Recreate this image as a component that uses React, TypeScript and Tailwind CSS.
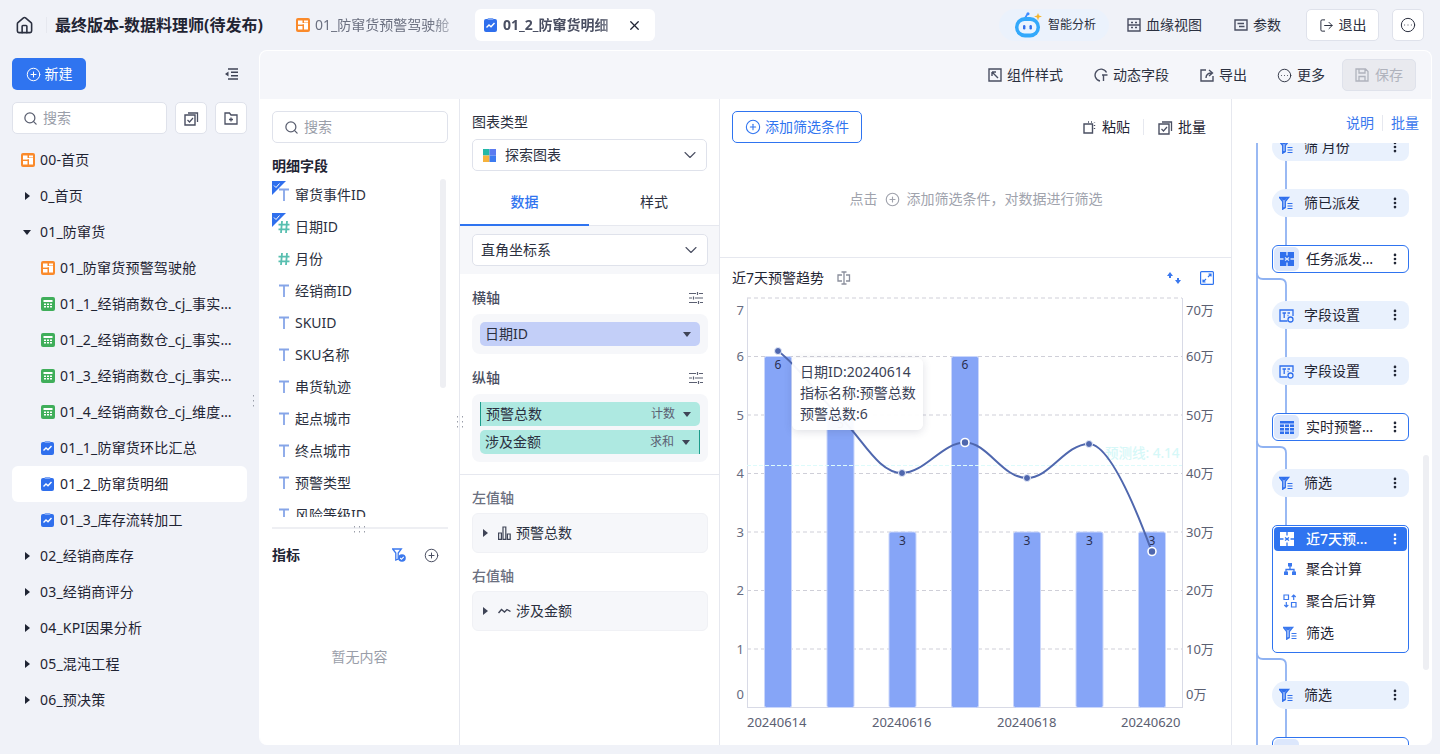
import type { ReactNode } from 'react';
import {
  ChevronDown,
  CircleEllipsis,
  CirclePlus,
  House,
  EllipsisVertical,
  LogOut,
  Search,
  X,
} from 'lucide-react';

const font = { fontFamily: '"Noto Sans", "Noto Sans CJK SC", sans-serif' };

/* ---------- small icons ---------- */

const Caret = ({ open = false, color = '#1f2433' }: { open?: boolean; color?: string }) => (
  <svg width="12" height="12" viewBox="0 0 12 12" className="shrink-0">
    {open ? <path d="M2 4h8l-4 5z" fill={color} /> : <path d="M4 2v8l5-4z" fill={color} />}
  </svg>
);

const DashIcon = ({ size = 14 }: { size?: number }) => (
  <svg width={size} height={size} viewBox="0 0 14 14" className="shrink-0">
    <rect width="14" height="14" rx="2" fill="#FA8A2B" />
    <path d="M2 2.500h4.500v4H2zM8 2.500h4v2H8zM2 8h4.500v3.500H2zM8 6h4v5.500H8z" fill="#fff" />
    <path d="M2 5h10v1.200H2z" fill="#fff" />
  </svg>
);

const SheetIcon = () => (
  <svg width="14" height="14" viewBox="0 0 14 14" className="shrink-0">
    <rect width="14" height="14" rx="2" fill="#3FAE5A" />
    <path d="M2.500 3h9v2h-9zM3 6.500h2v1.500H3zM6 6.500h2v1.500H6zM9 6.500h2v1.500H9zM3 9h2v1.500H3zM6 9h2v1.500H6zM9 9h2v1.500H9z" fill="#fff" />
  </svg>
);

const ChartIcon = ({ size = 14 }: { size?: number }) => (
  <svg width={size} height={size} viewBox="0 0 14 14" className="shrink-0">
    <rect y="1" width="13" height="13" rx="2" fill="#2F6FED" />
    <rect x="3.500" y="0" width="6" height="2" rx="1" fill="#7EA6F4" />
    <path d="M2.500 9.500 5 7l2 1.800 3.500-3.800" fill="none" stroke="#fff" strokeWidth="1.400" />
  </svg>
);

const FilterIcon = ({ color = '#2F6FED' }: { color?: string }) => (
  <svg width="14" height="14" viewBox="0 0 14 14" className="shrink-0">
    <path d="M.5 1.500h9l-3.300 4v6L3.800 13V5.500z" fill="none" stroke={color} strokeWidth="1.500" />
    <path d="M1.500 1.500h7l-2.500 3H3.800z" fill={color} />
    <path d="M8.500 7.500h5M8.500 10h5M8.500 12.500h5" stroke={color} strokeWidth="1.200" />
  </svg>
);

const FilterCheckIcon = () => (
  <svg width="14" height="14" viewBox="0 0 14 14" className="shrink-0">
    <path d="M.7 1h8.600L6.200 5v6L3.800 12V5z" fill="none" stroke="#3B78EE" strokeWidth="1.300" />
    <circle cx="10" cy="10" r="3.800" fill="#3B78EE" />
    <path d="M8.200 10l1.300 1.300 2.200-2.500" fill="none" stroke="#fff" strokeWidth="1.100" />
  </svg>
);

const FieldSetIcon = () => (
  <svg width="15" height="15" viewBox="0 0 15 15" className="shrink-0">
    <path d="M8.500 13H1V2h13v6" fill="none" stroke="#2F6FED" strokeWidth="1.300" />
    <path d="M3.500 5H7M5.200 5v5M8.500 5h2.500M8.500 7.500h1" stroke="#2F6FED" strokeWidth="1.300" fill="none" />
    <circle cx="11.500" cy="11.500" r="2.500" fill="none" stroke="#2F6FED" strokeWidth="1.300" />
  </svg>
);

const PuzzleIcon = ({ color = '#2F6FED', hole = '#DCE7FC' }: { color?: string; hole?: string }) => (
  <svg width="14" height="14" viewBox="0 0 14 14" className="shrink-0">
    <rect width="14" height="14" fill={color} />
    <path d="M7 0v3.500M7 10.500V14M0 7h3.500M10.500 7H14M5 5.500l4 3M9 5.500 5 8.500" stroke={hole} strokeWidth="1.300" fill="none" />
  </svg>
);

const TableIcon = () => (
  <svg width="14" height="14" viewBox="0 0 14 14" className="shrink-0">
    <path d="M0 1h14v2.500H0zM0 4.500h4v2.500H0zM5 4.500h4v2.500H5zM10 4.500h4v2.500h-4zM0 8h4v2.500H0zM5 8h4v2.500H5zM10 8h4v2.500h-4zM0 11.500h4V14H0zM5 11.500h4V14H5zM10 11.500h4V14h-4z" fill="#2F6FED" />
  </svg>
);

const TreeIcon = () => (
  <svg width="14" height="14" viewBox="0 0 14 14" className="shrink-0">
    <path d="M5 1h4v3.500H5zM1 9.500h4V13H1zM9 9.500h4V13H9z" fill="#3B78EE" />
    <path d="M7 4v3.500M3 10V7.500h8V10" fill="none" stroke="#3B78EE" strokeWidth="1.300" />
  </svg>
);

const SwapIcon = () => (
  <svg width="14" height="14" viewBox="0 0 14 14" className="shrink-0">
    <path d="M1 1h4.500v4.500H1zM8.500 8.500H13V13H8.500z" fill="none" stroke="#3B78EE" strokeWidth="1.200" />
    <path d="M10.700 6V1M8.700 3l2-2 2 2M3.300 8v5M1.300 11l2 2 2-2" fill="none" stroke="#3B78EE" strokeWidth="1.200" />
  </svg>
);

const Tune = () => (
  <svg width="14" height="14" viewBox="0 0 14 14" className="shrink-0">
    <path d="M0 2.500h7M10 2.500h4M0 7h3M6 7h8M0 11.500h8M11 11.500h3M8.500 1v3M4.500 5.500v3M9.500 10v3" stroke="#5b6072" strokeWidth="1.200" fill="none" />
  </svg>
);

const FieldT = () => (
  <svg width="12" height="14" viewBox="0 0 12 14" className="shrink-0">
    <path d="M1 1.500h10M6 1.500V13" stroke="#86A5E8" strokeWidth="1.800" fill="none" />
  </svg>
);

const FieldHash = () => (
  <svg width="12" height="14" viewBox="0 0 12 14" className="shrink-0">
    <path d="M4 1 3 13M9 1 8 13M.5 4.700h11M.5 9.300h11" stroke="#58BFB0" strokeWidth="1.800" fill="none" />
  </svg>
);

const CheckedCorner = () => (
  <svg width="14" height="14" viewBox="0 0 14 14" className="absolute left-0 top-[2px]">
    <path d="M0 0h14L0 14z" fill="#2F6FED" />
    <path d="M2 4.500 4 6.500 7.500 2.500" stroke="#fff" strokeWidth="1" fill="none" />
  </svg>
);

const BatchIcon = () => (
  <svg width="15" height="15" viewBox="0 0 15 15" className="shrink-0">
    <path d="M1 4h10v10H1z" fill="none" stroke="#4a4f62" strokeWidth="1.400" />
    <path d="M4 2h9.500v9" fill="none" stroke="#4a4f62" strokeWidth="1.300" />
    <path d="M3.500 9l2 2 3.500-4" fill="none" stroke="#4a4f62" strokeWidth="1.200" />
  </svg>
);

const BoxIcon = ({ children }: { children: ReactNode }) => (
  <svg width="14" height="14" viewBox="0 0 14 14" fill="none" stroke="#4a4f62" strokeWidth="1.400" className="shrink-0">
    {children}
  </svg>
);

const RobotIcon = () => (
  <svg width="27" height="26" viewBox="0 0 27 26" className="shrink-0">
    <path d="M10 6 12.500 2" stroke="#3D8BFF" strokeWidth="1.600" />
    <circle cx="13" cy="1.800" r="1.500" fill="#3D8BFF" />
    <rect x="0" y="5" width="25" height="20.500" rx="10" fill="#33A9FB" />
    <rect x="3.500" y="9" width="18" height="12.500" rx="6" fill="#EAF4FF" />
    <rect x="8" y="13" width="2.400" height="4.500" rx="1.200" fill="#2F6FED" />
    <rect x="14.500" y="13" width="2.400" height="4.500" rx="1.200" fill="#2F6FED" />
    <path d="M23 1l1 2.500L27 4.500l-3 1L23 8.500l-1-3-3-1 3-1z" fill="#F5B52E" />
  </svg>
);

const DragDots = ({ cols, rows, className }: { cols: number; rows: number; className: string }) => (
  <svg width={cols * 5} height={rows * 5} className={`absolute ${className}`}>
    {Array.from({ length: cols * rows }).map((_, i) => (
      <rect key={i} x={(i % cols) * 5 + 1} y={Math.floor(i / cols) * 5 + 1} width="1" height="1.500" fill="#9a9ea9" />
    ))}
  </svg>
);

/* ---------- left tree ---------- */

type TreeRow = { label: string; icon?: ReactNode; indent?: boolean; caret?: 'open' | 'closed'; active?: boolean };

const treeRows: TreeRow[] = [
  { label: '00-首页', icon: <DashIcon /> },
  { label: '0_首页', caret: 'closed' },
  { label: '01_防窜货', caret: 'open' },
  { label: '01_防窜货预警驾驶舱', icon: <DashIcon />, indent: true },
  { label: '01_1_经销商数仓_cj_事实…', icon: <SheetIcon />, indent: true },
  { label: '01_2_经销商数仓_cj_事实…', icon: <SheetIcon />, indent: true },
  { label: '01_3_经销商数仓_cj_事实…', icon: <SheetIcon />, indent: true },
  { label: '01_4_经销商数仓_cj_维度…', icon: <SheetIcon />, indent: true },
  { label: '01_1_防窜货环比汇总', icon: <ChartIcon />, indent: true },
  { label: '01_2_防窜货明细', icon: <ChartIcon />, indent: true, active: true },
  { label: '01_3_库存流转加工', icon: <ChartIcon />, indent: true },
  { label: '02_经销商库存', caret: 'closed' },
  { label: '03_经销商评分', caret: 'closed' },
  { label: '04_KPI因果分析', caret: 'closed' },
  { label: '05_混沌工程', caret: 'closed' },
  { label: '06_预决策', caret: 'closed' },
];

const Sidebar = () => (
  <aside className="relative w-[259px] shrink-0 flex flex-col pl-3 pr-[12px]">
    <DragDots cols={1} rows={3} className="left-[252px] top-[344px]" />
    <div className="h-[48px] flex items-center justify-between pr-[9px]">
      <button className="h-8 w-[74px] rounded-[5px] bg-[#2F74F0] text-white text-sm flex items-center justify-center gap-1">
        <CirclePlus size={15} strokeWidth={1.6} />
        新建
      </button>
      <svg width="14" height="12" viewBox="0 0 14 12">
        <path d="M4 1h10M7 4.300h7M7 7.700h7M4 11h10" stroke="#3f4456" strokeWidth="1.400" />
        <path d="M4.500 3.500v5L1 6z" fill="#3f4456" />
      </svg>
    </div>
    <div className="flex items-center gap-2 mt-[4px]">
      <div className="h-8 w-[155px] rounded-[5px] bg-white border border-[#DFE2EB] flex items-center pl-[10px] gap-[5px]">
        <Search size={15} className="text-[#5a5f70]" />
        <span className="text-sm text-[#9a9ea9]">搜索</span>
      </div>
      <div className="h-8 w-8 rounded-[5px] bg-white border border-[#DFE2EB] flex items-center justify-center">
        <BatchIcon />
      </div>
      <div className="h-8 w-8 rounded-[5px] bg-white border border-[#DFE2EB] flex items-center justify-center">
        <svg width="14" height="13" viewBox="0 0 14 13" fill="none" stroke="#4a4f62" strokeWidth="1.300">
          <path d="M1 1h4.500l1.500 2h6v9H1zM7 5.500v4M5 7.500h4" />
        </svg>
      </div>
    </div>
    <div className="mt-[8px] flex flex-col">
      {treeRows.map((row) => (
        <div
          key={row.label}
          className={`h-9 flex items-center gap-[5px] rounded-md pr-2 ${row.indent ? 'pl-[29px]' : 'pl-[9px]'} ${row.active ? 'bg-white' : ''}`}
        >
          {row.caret ? (
            <span className="w-3 flex justify-center mr-[2px]">
              <Caret open={row.caret === 'open'} />
            </span>
          ) : (
            row.icon
          )}
          <span className="text-sm text-[#1f2433] whitespace-nowrap tracking-[0.2px]">{row.label}</span>
        </div>
      ))}
    </div>
  </aside>
);

/* ---------- field list ---------- */

const fields: { label: string; kind: 'text' | 'num'; checked?: boolean }[] = [
  { label: '窜货事件ID', kind: 'text', checked: true },
  { label: '日期ID', kind: 'num', checked: true },
  { label: '月份', kind: 'num' },
  { label: '经销商ID', kind: 'text' },
  { label: 'SKUID', kind: 'text' },
  { label: 'SKU名称', kind: 'text' },
  { label: '串货轨迹', kind: 'text' },
  { label: '起点城市', kind: 'text' },
  { label: '终点城市', kind: 'text' },
  { label: '预警类型', kind: 'text' },
  { label: '风险等级ID', kind: 'text' },
];

const FieldPanel = () => (
  <section className="w-[200px] shrink-0 border-r border-[#E6E8EF] flex flex-col bg-white">
    <div className="pl-3 pr-[11px] pt-[12px]">
      <div className="h-8 rounded-[5px] border border-[#DFE2EB] flex items-center pl-[11px] gap-[5px]">
        <Search size={15} className="text-[#5a5f70]" />
        <span className="text-sm text-[#9a9ea9]">搜索</span>
      </div>
      <div className="mt-[13px] text-sm font-bold text-[#1f2433] leading-5">明细字段</div>
    </div>
    <div className="relative h-[338px] mt-[3px] overflow-hidden pl-3">
      <div className="absolute right-[13px] top-0 w-[6px] h-[209px] rounded-[3px] bg-[#EEEFF3]" />
      {fields.map((f) => (
        <div key={f.label} className="relative h-8 flex items-center gap-[5px] pl-[6px]">
          {f.checked && <CheckedCorner />}
          {f.kind === 'text' ? <FieldT /> : <FieldHash />}
          <span className="text-sm text-[#2b3040]">{f.label}</span>
        </div>
      ))}
    </div>
    <div className="relative ml-3 mr-[11px] h-[2px] bg-[#EEEFF3] mt-[10px]">
      <DragDots cols={3} rows={2} className="left-[81px] -top-[2px]" />
    </div>
    <div className="flex items-center justify-between pl-3 pr-[20px] mt-[16px] h-5">
      <span className="text-sm font-bold text-[#1f2433]">指标</span>
      <div className="flex items-center gap-[18px]">
        <FilterCheckIcon />
        <CirclePlus size={15} className="text-[#4a4f62]" strokeWidth={1.6} />
      </div>
    </div>
    <div className="flex-1 flex justify-center pt-[82px] text-sm leading-5 text-[#9a9ea9]">暂无内容</div>
  </section>
);

/* ---------- config panel ---------- */

const Select = ({ children }: { children: ReactNode }) => (
  <div className="h-8 rounded-[5px] bg-white border border-[#DFE2EB] flex items-center justify-between pl-[8px] pr-[6px]">
    <div className="flex items-center gap-2 text-sm text-[#2b3040]">{children}</div>
    <ChevronDown size={20} strokeWidth={1.300} className="text-[#4a4f62]" />
  </div>
);

const Pill = ({ label, agg, tone }: { label: string; agg?: string; tone: 'axis' | 'left' | 'right' }) => (
  <div
    className={`h-6 rounded-[5px] flex items-center justify-between pl-[5px] pr-[7px] text-sm text-[#2b3040] ${
      tone === 'axis' ? 'bg-[#C3CFF8]' : 'bg-[#AEE9E1]'
    } ${tone === 'left' ? 'border-l border-l-[#1c9b8b] rounded-l-none' : ''} ${
      tone === 'right' ? 'border-r border-r-[#1c9b8b] rounded-r-none' : ''
    }`}
  >
    <span>{label}</span>
    <span className="flex items-center gap-[6px]">
      {agg && <span className="text-xs text-[#5b6072]">{agg}</span>}
      <Caret open color="#3f4456" />
    </span>
  </div>
);

const ValueAxis = ({ icon, label }: { icon: ReactNode; label: string }) => (
  <div className="h-10 rounded-md bg-[#F6F7FA] border border-[#F0F1F5] flex items-center pl-[6px] gap-[5px] text-sm text-[#2b3040]">
    <Caret color="#3f4456" />
    <span className="ml-[2px]">{icon}</span>
    <span>{label}</span>
  </div>
);

const ConfigPanel = () => (
  <section className="relative w-[260px] shrink-0 border-r border-[#E6E8EF] flex flex-col bg-white">
    <DragDots cols={2} rows={3} className="-left-[4px] top-[316px]" />
    <div className="px-3 pt-[14px]">
      <div className="text-sm leading-[17px] text-[#2b3040]">图表类型</div>
      <div className="mt-[9px]">
        <Select>
          <svg width="13" height="13" viewBox="0 0 12 12" className="ml-[2px]">
            <rect width="6" height="6" fill="#22B8A7" />
            <rect x="6" width="6" height="6" fill="#5B7BF0" />
            <rect y="6" width="6" height="6" fill="#F6B23C" />
            <rect x="6" y="6" width="6" height="6" fill="#3D7BF0" />
          </svg>
          <span className="ml-[1px]">探索图表</span>
        </Select>
      </div>
    </div>
    <div className="h-[55px] flex border-b border-[#E6E8EF] text-sm">
      <div className="w-[129px] -mb-[1px] pt-[8px] flex items-center justify-center font-medium text-[#2F74F0] border-b-2 border-[#2F74F0]">数据</div>
      <div className="flex-1 pt-[8px] flex items-center justify-center text-[#2b3040]">样式</div>
    </div>
    <div className="bg-[#F6F7FA] h-[48px] pl-3 pr-[11px] pt-[8px]">
      <Select>直角坐标系</Select>
    </div>
    <div className="pl-3 pr-[11px] pt-[15px] relative">
      <div className="flex items-center justify-between pr-[5px] h-[18px] text-sm text-[#4a4f62] font-medium">
        横轴 <Tune />
      </div>
      <div className="mt-[7px] rounded-lg bg-[#F6F7FA] p-2">
        <Pill label="日期ID" tone="axis" />
      </div>
      <div className="mt-[15px] flex items-center justify-between pr-[5px] h-[18px] text-sm text-[#4a4f62] font-medium">
        纵轴 <Tune />
      </div>
      <div className="mt-[7px] rounded-lg bg-[#F6F7FA] px-2 py-2 flex flex-col gap-[4px]">
        <Pill label="预警总数" agg="计数" tone="left" />
        <Pill label="涉及金额" agg="求和" tone="right" />
      </div>
    </div>
    <div className="mt-[12px] border-t border-[#E6E8EF] pl-3 pr-[11px] pt-[14px]">
      <div className="text-sm leading-[18px] text-[#6b7080] font-medium">左值轴</div>
      <div className="mt-[6px]">
        <ValueAxis
          label="预警总数"
          icon={
            <svg width="13" height="14" viewBox="0 0 13 14" fill="none" stroke="#3f4456" strokeWidth="1.200" className="block">
              <path d="M.6 7h2.800v6.400H.6zM5 1h2.800v12.400H5zM9.400 8h2.800v5.400H9.400z" />
            </svg>
          }
        />
      </div>
      <div className="mt-[14px] text-sm leading-[18px] text-[#6b7080] font-medium">右值轴</div>
      <div className="mt-[6px]">
        <ValueAxis
          label="涉及金额"
          icon={
            <svg width="13" height="14" viewBox="0 0 13 14" fill="none" stroke="#3f4456" strokeWidth="1.400" className="block">
              <path d="M.5 9 3.500 5.500 6.500 8 9 5.500 12.500 7.500" />
            </svg>
          }
        />
      </div>
    </div>
  </section>
);

/* ---------- chart ---------- */

const bars = [
  { x: 764.5, v: 6 },
  { x: 827, v: 5 },
  { x: 889, v: 3 },
  { x: 951.5, v: 6 },
  { x: 1013.5, v: 3 },
  { x: 1076, v: 3 },
  { x: 1138.5, v: 3 },
];

const ox = 720;
const oy = 290;
const yOf = (v: number) => 708.5 - v * 58.5 - oy;

const TrendChart = () => (
  <svg width="512" height="456" viewBox="0 0 512 456" className="block" fontFamily='"Noto Sans", "Noto Sans CJK SC", sans-serif'>
    {/* grid */}
    {[1, 2, 3, 4, 5, 6, 7].map((v) => (
      <line key={v} x1="27" x2="462" y1={yOf(v)} y2={yOf(v)} stroke="#CFCFD8" strokeDasharray="4 3" />
    ))}
    <line x1="27.500" x2="27.500" y1={yOf(7)} y2={yOf(0)} stroke="#D8DAE6" />
    <line x1="462.500" x2="462.500" y1={yOf(7)} y2={yOf(0)} stroke="#D8DAE6" />
    <line x1="27" x2="463" y1={yOf(0)} y2={yOf(0)} stroke="#D8DAE6" />

    {/* bars */}
    {bars.map((b) => (
      <g key={b.x}>
        <path
          d={`M${b.x - ox + 2} ${yOf(0)}q-2 0-2-2v${-b.v * 58.5 + 4}q0-2 2-2h23q2 0 2 2v${b.v * 58.5 - 4}q0 2-2 2z`}
          fill="#86A5F7"
          stroke="#C9D6FB"
        />
        <text x={b.x - ox + 13.500} y={yOf(b.v) + 12.500} fontSize="12" textAnchor="middle" fill="#2b3050">
          {b.v}
        </text>
      </g>
    ))}

    {/* forecast line */}
    <line x1="27" x2="462" y1="176.500" y2="176.500" stroke="#DDFBFB" strokeDasharray="4 2" />
    <text x="385" y="169" fontSize="13.500" fontWeight="500" fill="#D6F8F8">预测线: 4.14</text>

    {/* trend */}
    <path
      d="M58 62C82 80 100 110 120 128C143 150 158 184 182 184C205 184 222 153.500 245 153.500C268 153.500 282 189 307 189C330 189 345 155 369 155C390 155 418 225 432 263"
      fill="none"
      stroke="#4F67AE"
      strokeWidth="2"
    />
    {[
      [58, 62],
      [182, 184],
      [307, 189],
      [369, 155],
    ].map(([x, y]) => (
      <circle key={x} cx={x} cy={y} r="3.500" fill="#4F67AE" stroke="#E6ECFB" strokeWidth="1" />
    ))}
    <circle cx="245" cy="153.500" r="4" fill="#4F67AE" stroke="#fff" strokeWidth="1.600" />
    <circle cx="432" cy="262.500" r="4" fill="#4F67AE" stroke="#fff" strokeWidth="1.600" />

    {/* axis labels */}
    <g fontSize="13" fill="#5b6072">
      {[0, 1, 2, 3, 4, 5, 6, 7].map((v) => (
        <text key={v} x="24" y={yOf(v) + (v === 7 ? 16 : v === 0 ? -9 : 4) + 0.5} textAnchor="end" fill="#666B80">
          {v}
        </text>
      ))}
      {[0, 1, 2, 3, 4, 5, 6, 7].map((v) => (
        <text key={v} x="466" y={yOf(v) + (v === 7 ? 16 : v === 0 ? -9 : 4) + 0.5}>
          {v === 0 ? '0万' : `${v}0万`}
        </text>
      ))}
      <text x="27" y="438">20240614</text>
      <text x="152" y="438">20240616</text>
      <text x="277" y="438">20240618</text>
      <text x="401" y="438">20240620</text>
    </g>
  </svg>
);

const ChartPanel = () => (
  <section className="w-[512px] shrink-0 border-r border-[#E6E8EF] flex flex-col bg-white">
    <div className="h-[159px] border-b border-[#E6E8EF] flex flex-col">
      <div className="flex items-center justify-between pl-3 pr-[25px] pt-[12px]">
        <button className="h-8 w-[130px] rounded-[5px] border border-[#2F74F0] text-sm text-[#2F74F0] flex items-center justify-center gap-[4px]">
          <CirclePlus size={16} strokeWidth={1.6} />
          添加筛选条件
        </button>
        <div className="flex items-center text-sm text-[#1f2433]">
          <span className="flex items-center gap-[5px]">
            <BoxIcon>
              <path d="M1 4h8.500v9H1zM5 2h1M8 2h1M11.500 2v.5M11.500 5v1M11.500 8v1" />
            </BoxIcon>
            粘贴
          </span>
          <span className="ml-[13px] mr-[14px] h-4 w-px bg-[#E6E8EF]" />
          <span className="flex items-center gap-[5px]">
            <BatchIcon />
            批量
          </span>
        </div>
      </div>
      <div className="mt-[46px] flex items-center justify-center gap-[7px] text-sm text-[#A0A3AD] pl-[1px]">
        <span>点击</span>
        <CirclePlus size={15} strokeWidth={1.8} />
        <span>添加筛选条件，对数据进行筛选</span>
      </div>
    </div>
    <div className="relative flex-1">
      <div className="h-[32px] flex items-center justify-between pl-3 pr-[17px] pt-[2px] mt-[3px]">
        <div className="flex items-center gap-[13px] text-sm text-[#1f2433]">
          近7天预警趋势
          <svg width="14" height="14" viewBox="0 0 14 14" fill="none" stroke="#8a8e9c" strokeWidth="1.300">
            <path d="M4.500 1h5M4.500 13h5M7 1v12M5 4H1v6h4M9 4h3.500v6H9" />
          </svg>
        </div>
        <div className="flex items-center gap-[19px]">
          <svg width="14" height="14" viewBox="0 0 14 14" fill="#3B78EE">
            <path d="M3 1 0 5h2v2h2V5h2zM11 13l3-4h-2V7h-2v2H8z" />
          </svg>
          <svg width="14" height="14" viewBox="0 0 14 14" fill="none" stroke="#2F74F0" strokeWidth="1.200">
            <rect x=".6" y=".6" width="12.800" height="12.800" rx="1" />
            <path d="M8 6 11 3M8.500 3H11v2.500M6 8 3 11M3 8.500V11h2.500" />
          </svg>
        </div>
      </div>
      <div className="absolute left-0 top-[31px]">
        <TrendChart />
      </div>
      <div className="absolute left-[72px] top-[100px] w-[131px] h-[72px] rounded-md bg-white/95 shadow-[0_2px_8px_rgba(40,50,80,0.15)] px-2 py-[3px] text-sm leading-[21px] text-[#3a3f55] whitespace-nowrap">
        <div>日期ID:20240614</div>
        <div>指标名称:预警总数</div>
        <div>预警总数:6</div>
      </div>
    </div>
  </section>
);

/* ---------- data flow panel ---------- */

const FlowNode = ({ icon, label, className }: { icon: ReactNode; label: string; className: string }) => (
  <div className={`absolute left-[40px] w-[137px] h-7 rounded-l-[14px] rounded-r-[8px] bg-[#E9F1FD] flex items-center pl-[6px] text-sm text-[#1f2433] ${className}`}>
    <span className="w-[16px] flex justify-center">{icon}</span>
    <span className="ml-[10px] flex-1">{label}</span>
    <EllipsisVertical size={14} strokeWidth={2.600} className="mr-[7px] text-[#1f2433]" />
  </div>
);

const OutlinedNode = ({ icon, label, className }: { icon: ReactNode; label: string; className: string }) => (
  <div className={`absolute left-[40px] w-[137px] h-7 rounded-[6px] bg-white border border-[#2F74F0] flex items-center text-sm text-[#1f2433] ${className}`}>
    <span className="ml-px w-[25px] h-[24px] rounded-[5px] bg-[#DCE7FC] flex items-center justify-center">{icon}</span>
    <span className="ml-[7px] flex-1 whitespace-nowrap">{label}</span>
    <EllipsisVertical size={14} strokeWidth={2.600} className="mr-[6px] text-[#1f2433]" />
  </div>
);

const FlowPanel = () => (
  <section className="flex-1 bg-white flex flex-col min-w-0">
    <div className="h-[44px] flex items-center justify-end pr-[12px] pt-[4px] text-sm text-[#3B78EE] shrink-0">
      <span>说明</span>
      <span className="mx-[8px] h-4 w-px bg-[#E6E8EF]" />
      <span>批量</span>
    </div>
    <div className="relative flex-1 overflow-hidden">
      <svg width="192" height="602" viewBox="0 0 192 602" className="absolute left-0 top-0" fill="none" stroke="#8FB2F2" strokeWidth="1.800">
        <path d="M25 0V602" />
        <path d="M54 0V102M25 130q0 6 6 6h17q6 0 6 6V270M25 298q0 6 6 6h17q6 0 6 6V382M25 510q0 6 6 6h17q6 0 6 6V602" />
      </svg>
      <FlowNode className="-top-[10px]" icon={<FilterIcon />} label="筛 月份" />
      <FlowNode className="top-[46px]" icon={<FilterIcon />} label="筛已派发" />
      <OutlinedNode className="top-[102px]" icon={<PuzzleIcon />} label="任务派发…" />
      <FlowNode className="top-[158px]" icon={<FieldSetIcon />} label="字段设置" />
      <FlowNode className="top-[214px]" icon={<FieldSetIcon />} label="字段设置" />
      <OutlinedNode className="top-[270px]" icon={<TableIcon />} label="实时预警…" />
      <FlowNode className="top-[326px]" icon={<FilterIcon />} label="筛选" />
      <div className="absolute left-[40px] top-[382px] w-[137px] h-[128px] rounded-[5px] bg-white border border-[#2F74F0] p-px">
        <div className="h-6 rounded-[4px] bg-[#2F74F0] flex items-center text-sm text-white font-medium">
          <span className="ml-[6px]">
            <PuzzleIcon color="#fff" hole="#2F74F0" />
          </span>
          <span className="ml-[12px] flex-1 whitespace-nowrap">近7天预…</span>
          <EllipsisVertical size={14} strokeWidth={2.600} className="mr-[5px]" />
        </div>
        <div className="mt-[2px]">
          {[
            { icon: <TreeIcon />, label: '聚合计算' },
            { icon: <SwapIcon />, label: '聚合后计算' },
            { icon: <FilterIcon color="#3B78EE" />, label: '筛选' },
          ].map((r) => (
            <div key={r.label} className="h-8 flex items-center pl-[9px] gap-[9px] text-sm text-[#1f2433]">
              {r.icon}
              {r.label}
            </div>
          ))}
        </div>
      </div>
      <FlowNode className="top-[538px]" icon={<FilterIcon />} label="筛选" />
      <div className="absolute left-[40px] top-[594px] w-[137px] h-7 rounded-[6px] bg-white border border-[#2F74F0]">
        <div className="ml-px mt-px w-[25px] h-[24px] rounded-[5px] bg-[#DCE7FC]" />
      </div>
      <div className="absolute right-[2px] top-[312px] w-[6px] h-[215px] rounded-[3px] bg-[#EEEFF3]" />
    </div>
  </section>
);

/* ---------- page ---------- */

const topActions = [
  { label: '组件样式', icon: <path d="M1 1h12v12H1zM4 4l6 6M4 4h4M4 4v4" />, gap: 'mr-[31px]' },
  { label: '动态字段', icon: <path d="M12.500 4.500A6 6 0 1 0 6 13M8 7h5.500M9.500 7v6" />, gap: 'mr-[31px]' },
  { label: '导出', icon: <path d="M6 2H1v11h12V8M6 10c0-3 2-5 6-5M9 2l3.500 3L9 8" />, gap: 'mr-[30px]' },
];

const App = () => (
  <div className="h-[754px] w-[1440px] overflow-hidden bg-[#F0F2F8] flex flex-col" style={font}>
    <header className="h-[50px] shrink-0 flex items-center pr-[16px]">
      <House size={19} strokeWidth={2} className="ml-[15px] text-[#2b3040]" />
      <span className="ml-[12px] h-4 w-px bg-[#E6E8EF]" />
      <span className="ml-[8px] text-base font-bold text-[#1f2433] whitespace-nowrap">最终版本-数据料理师(待发布)</span>
      <div className="ml-[33px] flex items-center gap-[5px] h-8 w-[179px] text-sm text-[#6b7080] whitespace-nowrap">
        <DashIcon />
        <span className="[mask-image:linear-gradient(to_right,black_85%,rgba(0,0,0,0.5))]">01_防窜货预警驾驶舱</span>
      </div>
      <div className="h-8 w-[180px] rounded-[6px] bg-white flex items-center pl-[9px] gap-[5px] text-sm font-bold text-[#4a4f62] whitespace-nowrap">
        <ChartIcon />
        <span className="w-[110px] [mask-image:linear-gradient(to_right,black_85%,rgba(0,0,0,0.5))]">01_2_防窜货明细</span>
        <X size={15} strokeWidth={2} className="ml-[9px] text-[#1f2433]" />
      </div>
      <div className="ml-auto flex items-center text-xs text-[#2b3040]">
        <div className="h-8 w-[110px] rounded-2xl bg-[#EBF2FC] flex items-center pl-[16px] gap-[6px]">
          <RobotIcon />
          智能分析
        </div>
        <div className="flex items-center gap-[5px] ml-[18px] text-sm">
          <BoxIcon>
            <path d="M1 1h12v12H1zM4 4.500h2M8 4.500h2M4 9.500h2M8 9.500h2M1 7h12" />
          </BoxIcon>
          血缘视图
        </div>
        <div className="flex items-center gap-[5px] ml-[32px] text-sm">
          <BoxIcon>
            <path d="M1 2h12v10H1zM3.500 5.500H10M5 8.500h5.500" />
          </BoxIcon>
          参数
        </div>
        <div className="ml-[25px] h-8 w-[73px] rounded-[5px] bg-white border border-[#DFE2EB] flex items-center justify-center gap-[5px] text-sm">
          <LogOut size={15} strokeWidth={1.600} />
          退出
        </div>
        <div className="ml-[13px] h-8 w-8 rounded-[5px] bg-white border border-[#DFE2EB] flex items-center justify-center">
          <CircleEllipsis size={16} strokeWidth={1.500} />
        </div>
      </div>
    </header>

    <div className="flex flex-1 min-h-0 pb-[9px] pr-[8px]">
      <Sidebar />
      <main className="flex-1 min-w-0 flex flex-col rounded-lg overflow-hidden bg-[#F5F6FA] border border-white border-b-0">
        <div className="h-[48px] shrink-0 flex items-center justify-end pr-[15px] text-sm text-[#2b3040]">
          {topActions.map((a) => (
            <span key={a.label} className={`flex items-center gap-[5px] ${a.gap}`}>
              <BoxIcon>{a.icon}</BoxIcon>
              {a.label}
            </span>
          ))}
          <span className="flex items-center gap-[5px] mr-[17px]">
            <CircleEllipsis size={15} strokeWidth={1.500} />
            更多
          </span>
          <div className="h-8 w-[74px] rounded-[5px] bg-[#E9EAEF] border border-[#DFE2EB] text-[#b0b3bd] flex items-center justify-center gap-[6px]">
            <svg width="14" height="14" viewBox="0 0 14 14" fill="none" stroke="#b0b3bd" strokeWidth="1.300">
              <path d="M1 1h9.500L13 3.500V13H1zM4 1v4h6V1M4 13V8.500h6V13" />
            </svg>
            保存
          </div>
        </div>
        <div className="flex flex-1 min-h-0">
          <FieldPanel />
          <ConfigPanel />
          <ChartPanel />
          <FlowPanel />
        </div>
      </main>
    </div>
  </div>
);

export default App;
